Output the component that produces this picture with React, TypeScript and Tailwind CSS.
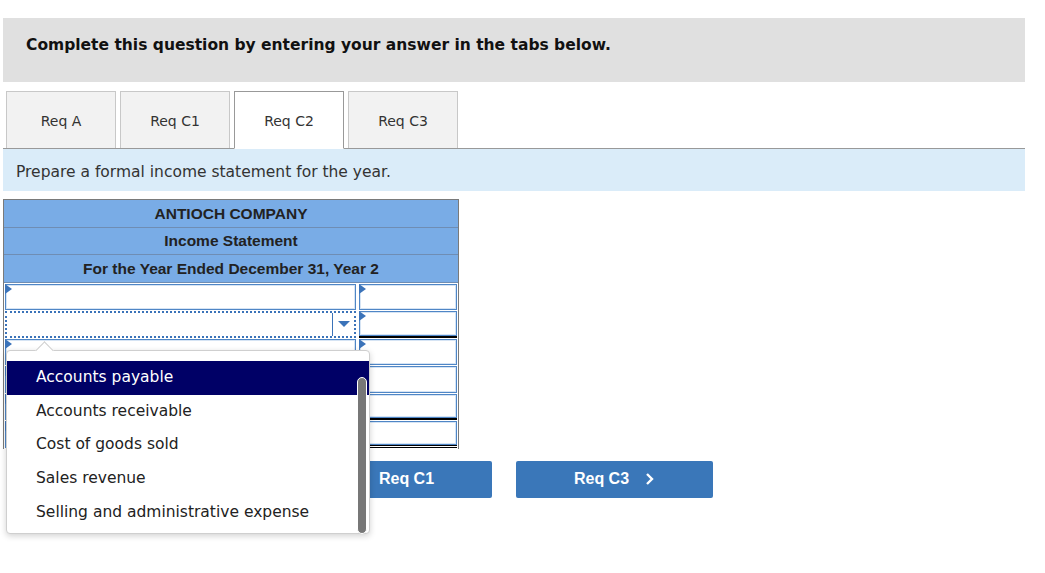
import React from 'react';

const verdana = { fontFamily: '"DejaVu Sans", Verdana, sans-serif' };
const arial = { fontFamily: '"Liberation Sans", Arial, sans-serif' };

const tabs = ['Req A', 'Req C1', 'Req C2', 'Req C3'];
const options = [
  'Accounts payable',
  'Accounts receivable',
  'Cost of goods sold',
  'Sales revenue',
  'Selling and administrative expense',
];

function Marker() {
  return (
    <span className="absolute left-0 top-0 w-0 h-0 border-y-[5px] border-y-transparent border-l-[7px] border-l-[#3b73b9]" />
  );
}

function Cell({ wide, bottom }: { wide?: boolean; bottom?: 'single' | 'double' }) {
  return (
    <div
      className={`relative h-full ${wide ? 'flex-1' : 'w-[98px]'} ${
        bottom === 'single' ? 'border-b-2 border-b-black' : bottom === 'double' ? 'border-b-[3px] border-double border-b-black' : ''
      }`}
    >
      <div className="h-full border border-[#4f86c6] shadow-[inset_0_0_0_1px_#d6e4f4] bg-white" />
      <Marker />
    </div>
  );
}

export default function App() {
  const rows: { right?: 'single' | 'double' }[] = [{}, { right: 'single' }, {}, {}, { right: 'single' }, { right: 'double' }];

  return (
    <div className="relative w-[1045px] h-[573px] overflow-hidden bg-white pt-[18px]" style={verdana}>
      <div className="ml-[3px] w-[1022px] h-[64px] bg-[#e0e0e0] pl-[23px] pt-[15px]">
        <p className="text-[15.5px] leading-[24px] font-bold text-[#111]">Complete this question by entering your answer in the tabs below.</p>
      </div>

      {/* tabs */}
      <div className="mt-[9px] ml-[3px] w-[1022px] h-[58px] flex items-end gap-[4px] pl-[3px] border-b border-[#999]">
        {tabs.map((t) => {
          const active = t === 'Req C2';
          return (
            <div
              key={t}
              className={`w-[110px] flex items-center justify-center pt-[2px] text-[14px] text-[#333] ${
                active ? 'bg-white border border-[#999] border-b-white -mb-px h-[58px]' : 'h-[57px] bg-[#f2f2f2] border border-b-0 border-[#c8c8c8]'
              }`}
            >
              {t}
            </div>
          );
        })}
      </div>

      <div className="ml-[3px] w-[1022px] h-[42px] bg-[#daecf9] flex items-center pl-[13px] pt-[5px]">
        <p className="text-[15.5px] text-[#333]">Prepare a formal income statement for the year.</p>
      </div>

      {/* statement table */}
      <div className="mt-[8px] ml-[3px] w-[456px] border-x border-t border-[#7a7a7a]" style={arial}>
        {['ANTIOCH COMPANY', 'Income Statement', 'For the Year Ended December 31, Year 2'].map((h) => (
          <div key={h} className="h-[27.5px] bg-[#79ace6] border-b border-[#6f8db3] flex items-center justify-center text-[15.5px] font-bold text-[#222]">
            {h}
          </div>
        ))}
        <div className="bg-white pt-[1px]">
          {rows.map((r, i) => (
            <div key={i} className="flex h-[27.5px] gap-[3px] pl-[1px] pr-[1px] pb-[1px]">
              {i === 1 ? (
                <div className="relative flex-1 h-full border-2 border-dotted border-[#3b73b9] flex">
                  <div className="flex-1" />
                  <div className="w-[22px] border-l border-[#3b73b9] flex items-center justify-center">
                    <span className="w-0 h-0 border-x-[6px] border-x-transparent border-t-[6px] border-t-[#3b73b9]" />
                  </div>
                </div>
              ) : (
                <Cell wide />
              )}
              <Cell bottom={r.right} />
            </div>
          ))}
        </div>
      </div>

      {/* nav buttons */}
      <div className="mt-[12px] ml-[295px] flex gap-[24px]" style={arial}>
        <button className="w-[197px] h-[37px] rounded-[2px] bg-[#3a77b9] text-white text-[16px] font-bold flex items-center justify-center gap-[16px]">
          <svg width="10" height="14" viewBox="0 0 10 14">
            <polyline points="8,2 3,7 8,12" fill="none" stroke="white" strokeWidth="2.4" />
          </svg>
          Req C1
        </button>
        <button className="w-[197px] h-[37px] rounded-[2px] bg-[#3a77b9] text-white text-[16px] font-bold flex items-center justify-center gap-[16px]">
          Req C3
          <svg width="10" height="14" viewBox="0 0 10 14">
            <polyline points="2,2 7,7 2,12" fill="none" stroke="white" strokeWidth="2.4" />
          </svg>
        </button>
      </div>

      {/* open dropdown list */}
      <div className="absolute left-[6px] top-[350px] w-[364px] h-[184px] bg-white border border-[#cfcfcf] rounded-[4px] shadow-[0_2px_6px_rgba(0,0,0,0.18)] pt-[10px]">
        <span className="absolute left-[31px] -top-[7px] w-[13px] h-[13px] rotate-45 bg-white border-l border-t border-[#cfcfcf]" />
        {options.map((o, i) => (
          <div
            key={o}
            className={`relative h-[33.6px] flex items-center pl-[29px] text-[15.5px] ${
              i === 0 ? 'bg-[#000066] text-white' : 'text-[#222]'
            }`}
          >
            {o}
          </div>
        ))}
        <span className="absolute left-[350px] top-[26px] w-[10px] h-[157px] rounded-full bg-[#777] border border-white" />
      </div>
    </div>
  );
}
